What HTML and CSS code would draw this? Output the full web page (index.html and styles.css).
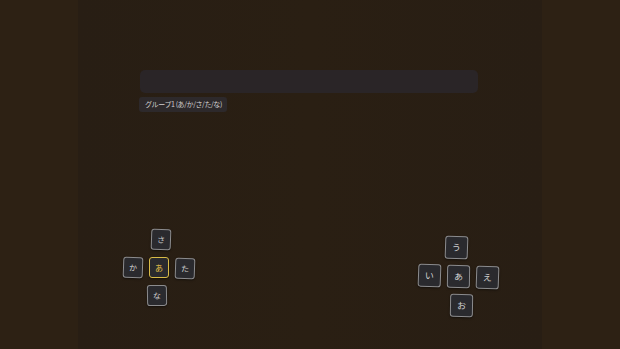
FILE: index.html
```html
<!DOCTYPE html>
<html lang="ja">
<head>
  <meta charset="UTF-8">
  <meta name="viewport" content="width=device-width, initial-scale=1.0">
  <title>かな入力</title>
  <link rel="stylesheet" href="styles.css">
</head>
<body>
  <div class="stage">
    <div class="panel">
      <div class="input-bar"></div>
      <div class="group-label">グループ1 (あ/か/さ/た/な)</div>

      <div class="pads">
        <div class="pad pad-left">
          <span class="key up">さ</span>
          <span class="key left">か</span>
          <span class="key center active">あ</span>
          <span class="key right">た</span>
          <span class="key down">な</span>
        </div>

        <div class="pad pad-right">
          <span class="key up">う</span>
          <span class="key left">い</span>
          <span class="key center">あ</span>
          <span class="key right">え</span>
          <span class="key down">お</span>
        </div>
      </div>
    </div>
  </div>
</body>
</html>
```

FILE: styles.css
```css
* {
  margin: 0;
  padding: 0;
  box-sizing: border-box;
}

body {
  width: 620px;
  height: 349px;
  overflow: hidden;
  background-color: #2d2114;
  font-family: 'Noto Sans CJK JP', 'Noto Sans', sans-serif;
}

.stage {
  height: 100%;
  padding-left: 78px;
}

.panel {
  width: 464px;
  height: 100%;
  padding-top: 70px;
  background: linear-gradient(90deg, #281e14 0%, #2a1f13 50%, #281e14 100%);
}

.input-bar {
  width: 338px;
  height: 23px;
  margin-left: 62px;
  border-radius: 5px;
  background-color: #2a2527;
}

.group-label {
  width: fit-content;
  margin-top: 4px;
  margin-left: 61px;
  height: 15px;
  padding: 0 5px 0 6px;
  border-radius: 3px;
  background-color: #2d292b;
  color: #d2d0d0;
  font-size: 7px;
  letter-spacing: -0.4px;
  line-height: 15px;
  white-space: nowrap;
}

.pads {
  display: flex;
  align-items: flex-start;
  margin-top: 117px;
  margin-left: 45px;
}

.pad {
  display: grid;
  grid-template-areas:
    ". up ."
    "left center right"
    ". down .";
}

.pad-left {
  grid-template-columns: repeat(3, 20px);
  grid-template-rows: repeat(3, 21px);
  gap: 7px 6px;
}

.pad-right {
  margin-left: 223px;
  margin-top: 7px;
  grid-template-columns: repeat(3, 23px);
  grid-template-rows: repeat(3, 23px);
  gap: 6px;
}

.key {
  display: flex;
  align-items: center;
  justify-content: center;
  border: 1px solid #8c8c8e;
  border-radius: 3px;
  background-color: #2a2a2e;
  color: #d0d0d0;
  font-size: 8px;
  box-shadow: 0 1px 2px rgba(0, 0, 0, 0.5);
}

.pad-right .key {
  font-size: 9px;
}

.key.active {
  border-color: #d9bb47;
  color: #e6c449;
}

.up { grid-area: up; }
.left { grid-area: left; }
.center { grid-area: center; }
.right { grid-area: right; }
.down { grid-area: down; }

/* the pads sit a little skewed in the scene */
.pad-left .up { transform: translate(2px, 0) rotate(2deg); }
.pad-left .left { transform: rotate(2deg); }
.pad-left .right { transform: translate(0, 1px) rotate(2deg); }
.pad-left .down { transform: translate(-2px, 0) rotate(-1deg); }

.pad-right .up { transform: translate(-2px, 0) rotate(2deg); }
.pad-right .left { transform: translate(0, -1px) rotate(2deg); }
.pad-right .center { transform: rotate(1deg); }
.pad-right .right { transform: translate(0, 1px) rotate(2deg); }
.pad-right .down { transform: translate(3px, 0) rotate(1deg); }
```
